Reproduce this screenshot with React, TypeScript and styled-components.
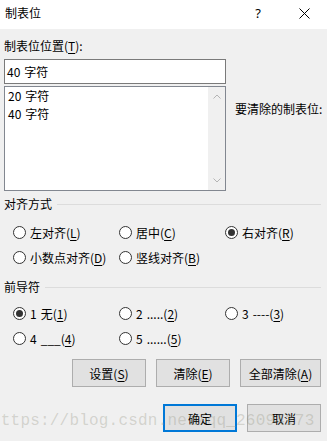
import React from "react";
import styled, { createGlobalStyle } from "styled-components";

const Global = createGlobalStyle`
  html, body { margin: 0; padding: 0; background: #f0f0f0; }
  body { font-family: "Noto Sans CJK SC", "Noto Sans", sans-serif; font-size: 12px; color: #000; }
`;

const Dialog = styled.div`
  position: relative;
  width: 327px;
  height: 441px;
  overflow: hidden;
  background: #f0f0f0;
  display: flex;
  flex-direction: column;
`;

const TitleBar = styled.div`
  height: 29px;
  background: #fff;
  display: flex;
  align-items: center;
`;

const Title = styled.div`
  flex: 1;
  padding-left: 5px;
  line-height: 16px;
  margin-top: -3px;
`;

const CaptionButton = styled.div`
  width: 46px;
  height: 29px;
  display: flex;
  align-items: center;
  justify-content: center;
  margin-top: -3px;
  font-size: 13px;
  font-family: "Noto Sans", sans-serif;
`;

const Body = styled.div`
  padding: 9px 6px 0 4px;
  display: flex;
  flex-direction: column;
`;

const TopSection = styled.div`
  display: flex;
`;

const LeftCol = styled.div`
  width: 222px;
  flex-shrink: 0;
  display: flex;
  flex-direction: column;
`;

const RightCol = styled.div`
  padding: 63px 0 0 9px;
  line-height: 16px;
  white-space: nowrap;
`;

const Label = styled.div`
  line-height: 16px;
  margin-bottom: 5px;
`;

const U = styled.span`
  text-decoration: underline;
  text-underline-offset: 2px;
`;

const Sp = styled.span`
  display: inline-block;
  width: 4px;
`;

const TextInput = styled.div`
  box-sizing: border-box;
  height: 25px;
  border: 1px solid #7a7a7a;
  background: #fff;
  padding-left: 2px;
  display: flex;
  align-items: center;
`;

const ListBox = styled.div`
  box-sizing: border-box;
  margin-top: 2px;
  height: 105px;
  border: 1px solid #828790;
  background: #fff;
  display: flex;
`;

const ListItems = styled.div`
  flex: 1;
  padding-left: 3px;
  line-height: 18px;
`;

const ScrollBar = styled.div`
  width: 17px;
  background: #f0f0f0;
  display: flex;
  flex-direction: column;
  justify-content: space-between;
  align-items: center;
  padding: 7px 0 7px;
`;

const GroupHeader = styled.div<{ $mt: number }>`
  display: flex;
  align-items: center;
  gap: 5px;
  margin-top: ${(p) => p.$mt}px;
  line-height: 16px;
  &::after {
    content: "";
    flex: 1;
    height: 1px;
    background: #dcdcdc;
  }
`;

const RadioGrid = styled.div<{ $mt: number }>`
  display: grid;
  grid-template-columns: 106px 106px 97px;
  grid-auto-rows: 25px;
  padding-left: 9px;
  margin-top: ${(p) => p.$mt}px;
`;

const RadioItem = styled.div`
  display: flex;
  align-items: center;
  gap: 4px;
  white-space: nowrap;
`;

const Circle = styled.span<{ $on?: boolean }>`
  box-sizing: border-box;
  width: 13px;
  height: 13px;
  border: 1px solid #333;
  border-radius: 50%;
  background: #fff;
  display: flex;
  align-items: center;
  justify-content: center;
  flex-shrink: 0;
  &::after {
    content: "";
    width: 7px;
    height: 7px;
    border-radius: 50%;
    background: ${(p) => (p.$on ? "#333" : "transparent")};
  }
`;

const ButtonRow = styled.div<{ $mt: number }>`
  display: flex;
  justify-content: flex-end;
  gap: 10px;
  margin-top: ${(p) => p.$mt}px;
`;

const Button = styled.div<{ $w: number; $default?: boolean }>`
  box-sizing: border-box;
  width: ${(p) => p.$w}px;
  height: 28px;
  background: #e1e1e1;
  border: ${(p) => (p.$default ? "2px solid #0078d7" : "1px solid #adadad")};
  display: flex;
  align-items: center;
  justify-content: center;
`;

const Watermark = styled.div`
  position: absolute;
  left: -9px;
  top: 413px;
  font-family: "Liberation Mono", monospace;
  font-size: 16px;
  line-height: 16px;
  letter-spacing: 0.2px;
  color: rgba(140, 140, 120, 0.3);
  white-space: nowrap;
  pointer-events: none;
`;

const Chevron = ({ up }: { up?: boolean }) => (
  <svg width="8" height="5" viewBox="0 0 8 5">
    <path
      d={up ? "M0.5 4.5 L4 1 L7.5 4.5" : "M0.5 0.5 L4 4 L7.5 0.5"}
      fill="none"
      stroke="#b4b4b4"
      strokeWidth="1"
    />
  </svg>
);

const Radio = ({ on, children }: { on?: boolean; children: React.ReactNode }) => (
  <RadioItem>
    <Circle $on={on} />
    <span>{children}</span>
  </RadioItem>
);

export default function App() {
  return (
    <>
      <Global />
      <Dialog>
        <TitleBar>
          <Title>制表位</Title>
          <CaptionButton>?</CaptionButton>
          <CaptionButton>
            <svg width="11" height="11" viewBox="0 0 11 11">
              <path d="M0.5 0.5 L10.5 10.5 M10.5 0.5 L0.5 10.5" stroke="#000" strokeWidth="1" />
            </svg>
          </CaptionButton>
        </TitleBar>
        <Body>
          <TopSection>
            <LeftCol>
              <Label>
                制表位位置(<U>T</U>):
              </Label>
              <TextInput>40<Sp />字符</TextInput>
              <ListBox>
                <ListItems>
                  <div>20<Sp />字符</div>
                  <div>40<Sp />字符</div>
                </ListItems>
                <ScrollBar>
                  <Chevron up />
                  <Chevron />
                </ScrollBar>
              </ListBox>
            </LeftCol>
            <RightCol>要清除的制表位:</RightCol>
          </TopSection>

          <GroupHeader $mt={5}>对齐方式</GroupHeader>
          <RadioGrid $mt={8}>
            <Radio>
              左对齐(<U>L</U>)
            </Radio>
            <Radio>
              居中(<U>C</U>)
            </Radio>
            <Radio on>
              右对齐(<U>R</U>)
            </Radio>
            <Radio>
              小数点对齐(<U>D</U>)
            </Radio>
            <Radio>
              竖线对齐(<U>B</U>)
            </Radio>
          </RadioGrid>

          <GroupHeader $mt={9}>前导符</GroupHeader>
          <RadioGrid $mt={6}>
            <Radio on>
              1<Sp />无(<U>1</U>)
            </Radio>
            <Radio>
              2<Sp />.....(<U>2</U>)
            </Radio>
            <Radio>
              3<Sp />----(<U>3</U>)
            </Radio>
            <Radio>
              4<Sp />___(<U>4</U>)
            </Radio>
            <Radio>
              5<Sp />......(<U>5</U>)
            </Radio>
          </RadioGrid>

          <ButtonRow $mt={8}>
            <Button $w={74}>
              设置(<U>S</U>)
            </Button>
            <Button $w={74}>
              清除(<U>E</U>)
            </Button>
            <Button $w={81}>
              全部清除(<U>A</U>)
            </Button>
          </ButtonRow>
          <ButtonRow $mt={17}>
            <Button $w={74} $default>
              确定
            </Button>
            <Button $w={74}>取消</Button>
          </ButtonRow>
        </Body>
        <Watermark>https://blog.csdn.net/qq_26094173</Watermark>
      </Dialog>
    </>
  );
}
